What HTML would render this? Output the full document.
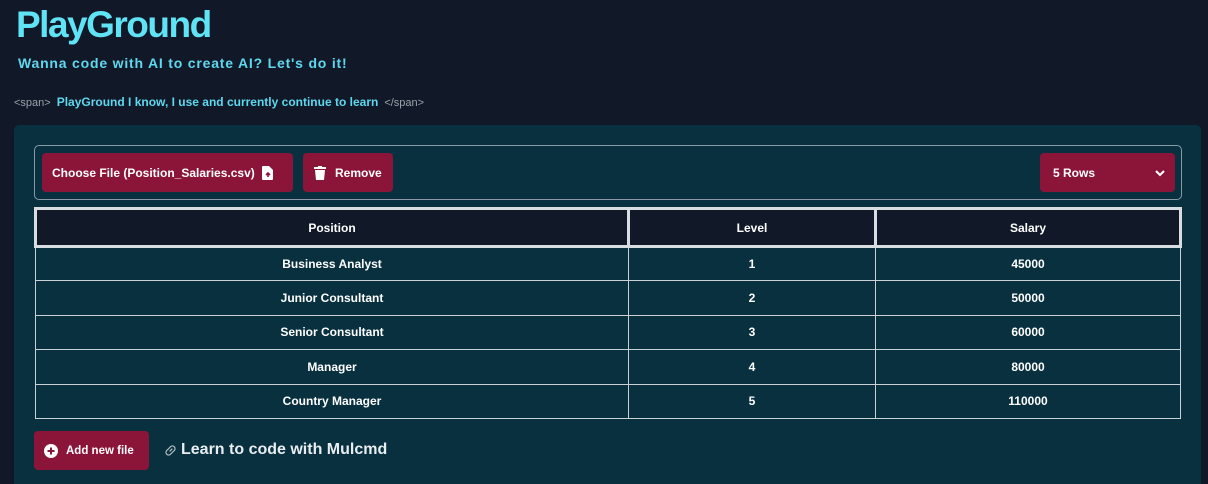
<!DOCTYPE html>
<html><head><style>
*{box-sizing:border-box;margin:0;padding:0}
html,body{width:1208px;height:484px;overflow:hidden}
body{background:#111827;font-family:"Liberation Sans",sans-serif;position:relative;color:#fff}
.abs{position:absolute}
h1{position:absolute;left:16px;top:4px;font-size:37px;color:#5fe3f5;font-family:"Liberation Sans",sans-serif;font-weight:bold;letter-spacing:-1.5px}
.sub{left:18px;top:55px;font-size:14px;color:#5fd8ef;font-weight:bold;letter-spacing:.8px}
.sp{left:14px;top:95px;font-size:11px;color:#9aa3ad}
.sp b{color:#5fd8ef;font-size:12px;margin:0 6px}
.panel{left:14px;top:125px;width:1187px;height:380px;background:#08303f;border-radius:5px}
.bar{left:34px;top:145px;width:1148px;height:55px;border:1px solid #8a9aa5;border-radius:5px}
.btn{background:#8b1538;border-radius:4px;font-size:12px;font-weight:bold;color:#fff;display:flex;align-items:center}
table{position:absolute;left:34px;top:207px;width:1148px;border-collapse:collapse;font-size:12px;font-weight:bold}
td,th{border:1px solid #c9d0d6;text-align:center;height:34.4px}
th{background:#111827;border:3px solid #d8dde2;height:38px;font-weight:bold}
</style></head><body>
<h1>PlayGround</h1>
<div class="abs sub">Wanna code with AI to create AI? Let's do it!</div>
<div class="abs sp">&lt;span&gt;<b>PlayGround I know, I use and currently continue to learn</b>&lt;/span&gt;</div>
<div class="abs panel"></div>
<div class="abs bar"></div>
<div class="abs btn" style="left:42px;top:153px;width:251px;height:39px;padding-left:10px">Choose File (Position_Salaries.csv)
<svg width="12" height="14" viewBox="0 0 12 14" style="margin-left:7px"><path d="M0 1q0-1 1-1h6l4 4v9q0 1-1 1H1q-1 0-1-1z" fill="#fff"/><path d="M6 11V7M4 9l2-2 2 2" stroke="#8b1538" stroke-width="1.6" fill="none"/></svg></div>
<div class="abs btn" style="left:303px;top:153px;width:90px;height:39px;padding-left:11px">
<svg width="12" height="14" viewBox="0 0 12 14" style="margin-right:9px"><rect x="0" y="1" width="12" height="2" fill="#fff"/><rect x="4" y="0" width="4" height="2" fill="#fff"/><path d="M1 4h10l-1 10H2z" fill="#fff"/></svg>Remove</div>
<div class="abs btn" style="left:1040px;top:153px;width:135px;height:39px;padding-left:13px">5 Rows
<svg width="10" height="8" viewBox="0 0 10 8" style="position:absolute;right:10px"><path d="M1 2l4 4 4-4" stroke="#fff" stroke-width="2" fill="none"/></svg></div>
<table>
<tr><th style="width:593px">Position</th><th style="width:247px">Level</th><th>Salary</th></tr>
<tr><td>Business Analyst</td><td>1</td><td>45000</td></tr>
<tr><td>Junior Consultant</td><td>2</td><td>50000</td></tr>
<tr><td>Senior Consultant</td><td>3</td><td>60000</td></tr>
<tr><td>Manager</td><td>4</td><td>80000</td></tr>
<tr><td>Country Manager</td><td>5</td><td>110000</td></tr>
</table>
<div class="abs btn" style="left:34px;top:431px;width:115px;height:39px;padding-left:10px;font-size:11.5px">
<svg width="14" height="14" viewBox="0 0 14 14" style="margin-right:8px"><circle cx="7" cy="7" r="7" fill="#fff"/><path d="M7 3.5v7M3.5 7h7" stroke="#8b1538" stroke-width="2"/></svg>Add new file</div>
<div class="abs" style="left:163px;top:441px;font-size:16px;font-weight:bold;color:#e8edf0;display:flex;align-items:center">
<svg width="15" height="15" viewBox="0 0 16 16" style="margin-right:3px"><path d="M7 9l3-3M6 6L4 8a2.5 2.5 0 0 0 4 4l2-2M10 10l2-2a2.5 2.5 0 0 0-4-4L6 6" stroke="#b8c2c8" stroke-width="1.3" fill="none"/></svg>Learn to code with Mulcmd</div>
</body></html>
